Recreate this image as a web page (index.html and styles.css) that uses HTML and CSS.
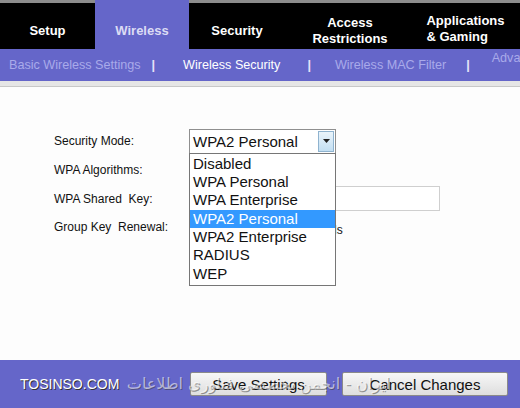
FILE: index.html
```html
<!DOCTYPE html>
<html lang="en">
<head>
  <meta charset="UTF-8" />
  <title>Wireless Security</title>
  <link rel="stylesheet" href="styles.css">
</head>
<body>
  <header>
    <nav class="tabs">
      <div class="tab tab-setup">Setup</div>
      <div class="tab tab-wireless active">Wireless</div>
      <div class="tab tab-security">Security</div>
      <div class="tab tab-access"><span>Access<br>Restrictions</span></div>
      <div class="tab tab-apps"><span class="left">Applications<br>&amp; Gaming</span></div>
    </nav>
    <div class="subnav">
      <span class="sub sub-basic">Basic Wireless Settings</span>
      <span class="sep">|</span>
      <span class="sub sub-current">Wireless Security</span>
      <span class="sep sep-2">|</span>
      <span class="sub sub-mac">Wireless MAC Filter</span>
      <span class="sep sep-3">|</span>
      <span class="sub sub-adv">Advanced</span>
    </div>
    <div class="strip"></div>
  </header>

  <main class="content">
    <div class="row">
      <label>Security Mode:</label>
      <div class="select-wrap">
        <div class="select">
          <span>WPA2 Personal</span>
          <span class="arrow">
            <svg width="7" height="4" viewBox="0 0 7 4"><path d="M0 0h7L3.5 4z" fill="#222"/></svg>
          </span>
        </div>
        <ul class="options">
          <li>Disabled</li>
          <li>WPA Personal</li>
          <li>WPA Enterprise</li>
          <li class="picked">WPA2 Personal</li>
          <li>WPA2 Enterprise</li>
          <li>RADIUS</li>
          <li>WEP</li>
        </ul>
      </div>
    </div>
    <div class="row">
      <label>WPA Algorithms:</label>
    </div>
    <div class="row">
      <label>WPA Shared&nbsp; Key:</label>
      <input class="key" type="text">
    </div>
    <div class="row">
      <label>Group Key&nbsp; Renewal:</label>
      <input class="renew" type="text">
      <span class="unit">seconds</span>
    </div>
  </main>

  <footer>
    <button class="btn btn-save">Save Settings</button>
    <button class="btn btn-cancel">Cancel Changes</button>
    <div class="mark">
      <span class="mark-latin">TOSINSO.COM</span>
      <span class="mark-fa" dir="rtl">ایران - انجمن تخصصی فناوری اطلاعات</span>
    </div>
  </footer>
</body>
</html>
```

FILE: styles.css
```css
body {
  margin: 0;
  width: 520px;
  height: 408px;
  overflow: hidden;
  background: #fdfdfd;
  font-family: "Liberation Sans", Arial, sans-serif;
  display: flex;
  flex-direction: column;
}
.tabs {
  display: flex;
  height: 49px;
  background: #000;
}
.tab {
  box-sizing: border-box;
  border-top: 3px solid #8c8c8c;
  color: #fff;
  font-weight: bold;
  font-size: 13px;
  line-height: 16px;
  display: flex;
  align-items: flex-start;
  justify-content: center;
  padding-top: 20px;
}
.tab.active {
  background: #6566c9;
  border-top-color: #6566c9;
  color: #dcdcf4;
}
.tab-setup { width: 95px; }
.tab-wireless { width: 94px; }
.tab-security { width: 96px; }
.tab-access { width: 130px; text-align: center; padding-top: 12px; }
.tab-apps { width: 105px; padding-top: 10px; padding-right: 4px; }
.tab-apps .left { text-align: left; }
.subnav {
  height: 32px;
  background: #6566c9;
  display: flex;
  align-items: center;
  font-size: 12.6px;
  white-space: nowrap;
  overflow: hidden;
  padding-left: 9px;
}
.sub { color: #a9aaea; }
.sub-current { color: #fff; margin-left: 28px; }
.sub-mac { margin-left: 24px; }
.sub-adv { margin-left: 22px; position: relative; top: -7px; }
.sep {
  color: #e4e4f8;
  font-weight: bold;
  margin-left: 11px;
}
.sep-2 { margin-left: 27px; }
.sep-3 { margin-left: 20px; }
.strip {
  height: 5px;
  background: #e6e6e6;
  border-bottom: 1px solid #c8c8c8;
}
.content {
  flex: 1;
  padding: 40px 0 0 54px;
  font-size: 12px;
  color: #111;
}
.row {
  display: flex;
  align-items: center;
  height: 28.7px;
}
.row label {
  width: 135px;
  flex-shrink: 0;
}
.select-wrap {
  position: relative;
}
.select {
  box-sizing: border-box;
  width: 147px;
  height: 25px;
  border: 1px solid #8f8f8f;
  background: #fff;
  display: flex;
  align-items: center;
  justify-content: space-between;
  padding: 0 1px 0 3px;
  font-size: 15px;
}
.arrow {
  width: 16px;
  height: 21px;
  box-sizing: border-box;
  border: 1px solid #8fb3cf;
  background: linear-gradient(#eaf4fb, #c3dff2);
  display: flex;
  align-items: center;
  justify-content: center;
}
.options {
  position: absolute;
  left: 0;
  top: 24px;
  width: 147px;
  box-sizing: border-box;
  margin: 0;
  padding: 1px 0 2px;
  list-style: none;
  background: #fff;
  border: 1px solid #767676;
  font-size: 15px;
  z-index: 2;
}
.options li {
  height: 18.3px;
  line-height: 18px;
  padding-left: 3px;
}
.options li.picked {
  background: #3399ff;
  color: #fff;
}
.key {
  width: 251px;
  height: 25px;
  box-sizing: border-box;
  border: 1px solid #cfcfcf;
  margin: 0;
}
.renew {
  width: 100px;
  height: 22px;
  box-sizing: border-box;
  border: 1px solid #cfcfcf;
  margin: 0 9px 0 0;
}
.unit { font-size: 12px; padding-top: 6px; }
footer {
  position: relative;
  height: 48px;
  background: #6566c9;
  display: flex;
  align-items: flex-start;
  padding: 12px 0 0 190px;
  box-sizing: border-box;
  gap: 15px;
}
.btn {
  height: 24px;
  box-sizing: border-box;
  border: 1px solid #8a8a8a;
  border-radius: 2px;
  background: linear-gradient(#f7f7f7, #dedede);
  font-family: "Liberation Sans", Arial, sans-serif;
  font-size: 15px;
  color: #111;
  padding: 0;
}
.btn-save { width: 137px; }
.btn-cancel { width: 166px; }
.mark {
  position: absolute;
  left: 20px;
  top: 14px;
  width: 380px;
  height: 22px;
  pointer-events: none;
}
.mark-latin {
  position: absolute;
  left: 0;
  top: 2px;
  color: #fff;
  font-size: 14px;
  text-shadow: 1px 1px 0 #333;
}
.mark-fa {
  position: absolute;
  left: 100px;
  top: 0;
  width: 270px;
  font-family: "DejaVu Sans", sans-serif;
  font-size: 16px;
  color: rgba(255, 255, 255, 0.55);
  text-shadow: 1px 1px 0 rgba(60, 60, 60, 0.5);
  white-space: nowrap;
  letter-spacing: 1px;
}
```
